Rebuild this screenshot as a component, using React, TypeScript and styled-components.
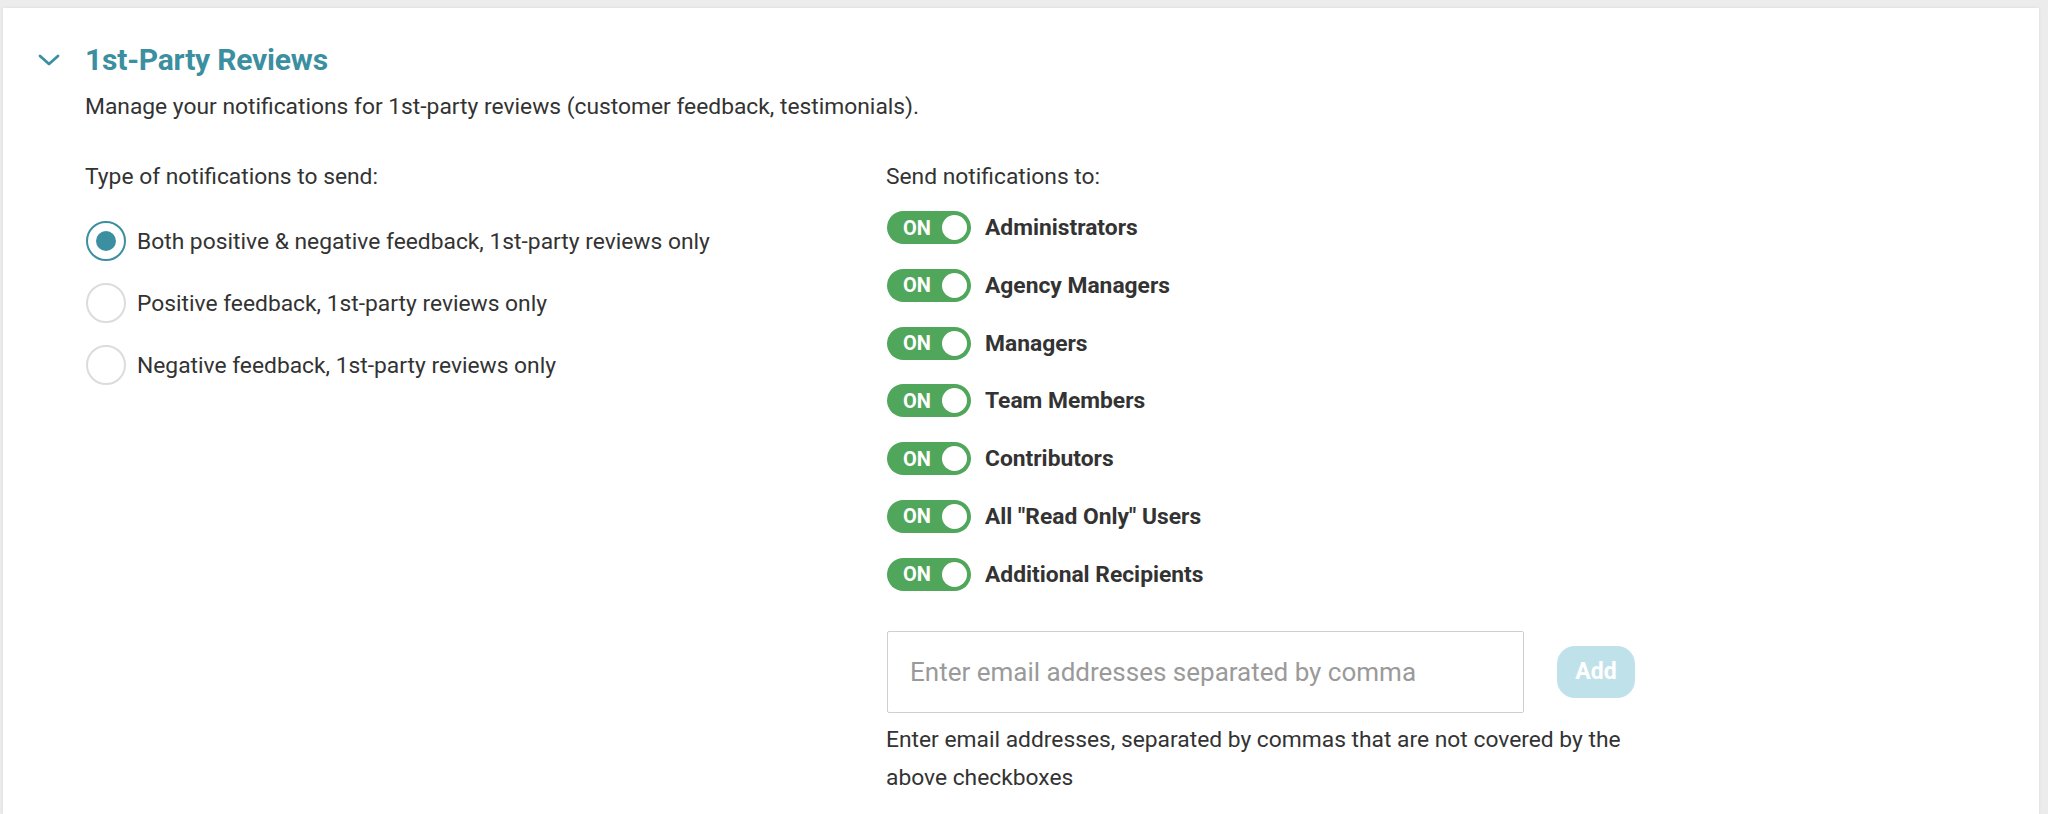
import React, { useState } from "react";
import styled, { createGlobalStyle } from "styled-components";

const GlobalStyle = createGlobalStyle`
  html, body { margin: 0; padding: 0; }
  body {
    background: #ececec;
    font-family: Roboto, "Liberation Sans", Arial, sans-serif;
    color: #333;
    -webkit-font-smoothing: antialiased;
  }
  * { box-sizing: border-box; }
`;

const Page = styled.div`
  padding: 8px 9px 0 3px;
  min-height: 814px;
`;

const Card = styled.section`
  background: #fff;
  min-height: 806px;
  box-shadow: 0 0 3px rgba(0, 0, 0, 0.08);
  padding: 34px 35px 0 35px;
`;

const Header = styled.div`
  display: flex;
  align-items: center;
  gap: 25px;
`;

const Chevron = styled.svg`
  width: 22px;
  height: 12px;
  flex: none;
`;

const Title = styled.h2`
  margin: 0;
  font-size: 30px;
  line-height: 36px;
  font-weight: 700;
  color: #3b8fa0;
  letter-spacing: -0.2px;
`;

const Body = styled.div`
  padding-left: 47px;
`;

const Description = styled.p`
  margin: 14px 0 0;
  font-size: 22.8px;
  line-height: 30px;
  color: #333;
`;

const Columns = styled.div`
  display: grid;
  grid-template-columns: 801px 1fr;
  margin-top: 40px;
`;

const Column = styled.div`
  display: flex;
  flex-direction: column;
`;

const ColumnLabel = styled.div`
  font-size: 22.8px;
  line-height: 30px;
  color: #333;
`;

const RadioList = styled.div`
  display: flex;
  flex-direction: column;
  gap: 22px;
  margin-top: 29px;
`;

const RadioRow = styled.label`
  display: flex;
  align-items: center;
  gap: 11px;
  height: 40px;
  cursor: pointer;
  font-size: 22.8px;
  color: #333;
`;

const RadioCircle = styled.span<{ $checked: boolean }>`
  width: 40px;
  height: 40px;
  border-radius: 50%;
  flex: none;
  border: 2px solid ${(p) => (p.$checked ? "#3b8fa0" : "#dcdcdc")};
  display: flex;
  align-items: center;
  justify-content: center;
  margin-left: 1px;
  &::after {
    content: "";
    width: 20px;
    height: 20px;
    border-radius: 50%;
    background: ${(p) => (p.$checked ? "#3b8fa0" : "transparent")};
  }
`;

const ToggleList = styled.div`
  display: flex;
  flex-direction: column;
  gap: 24.8px;
  margin-top: 19px;
`;

const ToggleRow = styled.div`
  display: flex;
  align-items: center;
  gap: 14px;
  height: 33px;
`;

const Toggle = styled.button<{ $on: boolean }>`
  width: 84px;
  height: 33px;
  border-radius: 17px;
  border: none;
  padding: 0 4px 0 16px;
  margin-left: 1px;
  background: ${(p) => (p.$on ? "#50a65a" : "#ccc")};
  display: flex;
  align-items: center;
  justify-content: space-between;
  cursor: pointer;
  flex: none;
`;

const ToggleText = styled.span`
  font-family: Roboto, "Liberation Sans", Arial, sans-serif;
  font-size: 20px;
  font-weight: 700;
  color: #fff;
`;

const Knob = styled.span`
  width: 25px;
  height: 25px;
  border-radius: 50%;
  background: #fff;
`;

const ToggleLabel = styled.span`
  font-size: 22.8px;
  font-weight: 700;
  color: #333;
`;

const EmailRow = styled.div`
  display: flex;
  align-items: center;
  gap: 33px;
  margin-top: 40px;
`;

const EmailField = styled.div`
  width: 637px;
  height: 82px;
  margin-left: 1px;
  border: 1px solid #cfcfcf;
  border-radius: 2px;
  padding-left: 22px;
  display: flex;
  align-items: center;
  background: #fff;
`;

const EmailInput = styled.input`
  width: 507px;
  height: 40px;
  border: none;
  padding: 0;
  background: transparent;
  font-family: Roboto, "Liberation Sans", Arial, sans-serif;
  font-size: 26px;
  color: #333;
  outline: none;
  &::placeholder {
    color: #9a9a9a;
  }
`;

const AddButton = styled.button`
  width: 78px;
  height: 52px;
  border: none;
  border-radius: 18px;
  background: #bfe2ea;
  color: #fff;
  font-family: Roboto, "Liberation Sans", Arial, sans-serif;
  font-size: 23px;
  font-weight: 700;
  padding: 0;
  cursor: default;
`;

const Helper = styled.p`
  margin: 8px 0 0;
  max-width: 760px;
  font-size: 22.8px;
  line-height: 38px;
  color: #333;
`;

const radioOptions = [
  "Both positive & negative feedback, 1st-party reviews only",
  "Positive feedback, 1st-party reviews only",
  "Negative feedback, 1st-party reviews only",
];

const recipients = [
  "Administrators",
  "Agency Managers",
  "Managers",
  "Team Members",
  "Contributors",
  'All "Read Only" Users',
  "Additional Recipients",
];

export default function App() {
  const [selected, setSelected] = useState(0);
  const [toggles, setToggles] = useState(recipients.map(() => true));

  return (
    <>
      <GlobalStyle />
      <Page>
        <Card>
          <Header>
            <Chevron viewBox="0 0 22 12" fill="none">
              <path
                d="M2 2 L11 10 L20 2"
                stroke="#3b8fa0"
                strokeWidth="2.8"
                strokeLinecap="round"
                strokeLinejoin="round"
              />
            </Chevron>
            <Title>1st-Party Reviews</Title>
          </Header>
          <Body>
            <Description>
              Manage your notifications for 1st-party reviews (customer feedback, testimonials).
            </Description>
            <Columns>
              <Column>
                <ColumnLabel>Type of notifications to send:</ColumnLabel>
                <RadioList>
                  {radioOptions.map((opt, i) => (
                    <RadioRow key={opt} onClick={() => setSelected(i)}>
                      <RadioCircle $checked={selected === i} />
                      {opt}
                    </RadioRow>
                  ))}
                </RadioList>
              </Column>
              <Column>
                <ColumnLabel>Send notifications to:</ColumnLabel>
                <ToggleList>
                  {recipients.map((r, i) => (
                    <ToggleRow key={r}>
                      <Toggle
                        $on={toggles[i]}
                        onClick={() =>
                          setToggles((t) => t.map((v, j) => (j === i ? !v : v)))
                        }
                      >
                        <ToggleText>{toggles[i] ? "ON" : "OFF"}</ToggleText>
                        <Knob />
                      </Toggle>
                      <ToggleLabel>{r}</ToggleLabel>
                    </ToggleRow>
                  ))}
                </ToggleList>
                <EmailRow>
                  <EmailField>
                    <EmailInput placeholder="Enter email addresses separated by commas" />
                  </EmailField>
                  <AddButton>Add</AddButton>
                </EmailRow>
                <Helper>
                  Enter email addresses, separated by commas that are not covered by the above
                  checkboxes
                </Helper>
              </Column>
            </Columns>
          </Body>
        </Card>
      </Page>
    </>
  );
}
